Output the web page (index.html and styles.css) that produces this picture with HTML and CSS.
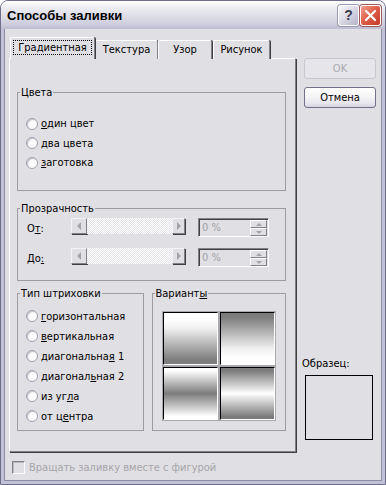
FILE: index.html
```html
<!DOCTYPE html>
<html lang="ru">
<head>
<meta charset="utf-8">
<title>Способы заливки</title>
<link rel="stylesheet" href="styles.css">
</head>
<body>
<div class="window">
  <div class="titlebar">
    <span class="title">Способы заливки</span>
    <div class="caps">
      <div class="cap help">?</div>
      <div class="cap close">
        <svg width="13" height="13" viewBox="0 0 13 13"><path d="M2 2 L11 11 M11 2 L2 11" stroke="#fff" stroke-width="2.2" stroke-linecap="round"/></svg>
      </div>
    </div>
  </div>
  <div class="client">
    <div class="main">
      <div class="left">
        <div class="tabs">
          <div class="tab active"><span class="focus">Градиентная</span></div>
          <div class="tab t2">Текстура</div>
          <div class="tab t3">Узор</div>
          <div class="tab t4">Рисунок</div>
        </div>
        <div class="panel">
          <fieldset class="group colors">
            <legend>Цвета</legend>
            <div class="items">
              <div class="radio"><span class="rb"></span><span><u>о</u>дин цвет</span></div>
              <div class="radio"><span class="rb"></span><span><u>д</u>ва цвета</span></div>
              <div class="radio"><span class="rb"></span><span><u>з</u>аготовка</span></div>
            </div>
          </fieldset>
          <fieldset class="group transp">
            <legend>Прозрачность</legend>
            <div class="items">
              <div class="trow">
                <span class="tlabel">О<u>т</u>:</span>
                <div class="scroll">
                  <span class="sbtn"><span class="arr-l"></span></span>
                  <span class="track"></span>
                  <span class="sbtn r"><span class="arr-r"></span></span>
                </div>
                <div class="spin">
                  <span class="val">0 %</span>
                  <span class="spbtns"><span class="spb"><span class="arr-u"></span></span><span class="spb"><span class="arr-d"></span></span></span>
                </div>
              </div>
              <div class="trow">
                <span class="tlabel">До<u>:</u></span>
                <div class="scroll">
                  <span class="sbtn"><span class="arr-l"></span></span>
                  <span class="track"></span>
                  <span class="sbtn r"><span class="arr-r"></span></span>
                </div>
                <div class="spin">
                  <span class="val">0 %</span>
                  <span class="spbtns"><span class="spb"><span class="arr-u"></span></span><span class="spb"><span class="arr-d"></span></span></span>
                </div>
              </div>
            </div>
          </fieldset>
          <div class="bottom-groups">
            <fieldset class="group hatch">
              <legend>Тип штриховки</legend>
              <div class="items">
                <div class="radio"><span class="rb"></span><span><u>г</u>оризонтальная</span></div>
                <div class="radio"><span class="rb"></span><span><u>в</u>ертикальная</span></div>
                <div class="radio"><span class="rb"></span><span>диагональна<u>я</u> 1</span></div>
                <div class="radio"><span class="rb"></span><span>диагонал<u>ь</u>ная 2</span></div>
                <div class="radio"><span class="rb"></span><span>из уг<u>л</u>а</span></div>
                <div class="radio"><span class="rb"></span><span>от ц<u>е</u>нтра</span></div>
              </div>
            </fieldset>
            <fieldset class="group variants">
              <legend>Вариант<u>ы</u></legend>
              <div class="tiles">
                <div class="tile g1"></div>
                <div class="tile g2"></div>
                <div class="tile g3"></div>
                <div class="tile g4"></div>
              </div>
            </fieldset>
          </div>
        </div>
      </div>
      <div class="right">
        <div class="btn disabled">OK</div>
        <div class="btn">Отмена</div>
        <div class="sample-label">Образец:</div>
        <div class="sample"></div>
      </div>
    </div>
    <div class="check"><span class="cb"></span><span>Вращать заливку вместе с фигурой</span></div>
  </div>
</div>
</body>
</html>
```

FILE: styles.css
```css
* { box-sizing: border-box; }
body {
  margin: 0;
  font-family: "DejaVu Sans Condensed", "DejaVu Sans", "Liberation Sans", sans-serif;
  font-size: 11px;
  color: #000;
  background: #fff;
}
u { text-decoration: underline; text-underline-offset: 1px; }

.window {
  width: 386px;
  height: 485px;
  border: 1px solid #6e6d8c;
  border-radius: 8px 8px 0 0;
  display: flex;
  flex-direction: column;
  overflow: hidden;
  background: #e0dfe3;
}
.titlebar {
  height: 28px;
  flex: none;
  display: flex;
  align-items: center;
  justify-content: space-between;
  padding: 0 4px 0 6px;
  background: linear-gradient(to bottom, #fefefe 0%, #ececf2 25%, #dddce7 55%, #cdccdc 85%, #bebdd1 100%);
}
.title {
  font: bold 13px "Liberation Sans", "DejaVu Sans", sans-serif;
  color: #000;
  margin-top: 1px;
}
.caps { display: flex; gap: 1px; }
.cap {
  width: 21px;
  height: 21px;
  border: 1px solid #fff;
  border-radius: 3px;
  display: flex;
  align-items: center;
  justify-content: center;
}
.help {
  background: linear-gradient(135deg, #f6f6fa 0%, #dddce8 45%, #b3b2c8 100%);
  color: #3a3a4e;
  font: bold 14px "Liberation Sans", sans-serif;
  box-shadow: 0 0 0 1px #9a99b4;
}
.close {
  background: linear-gradient(135deg, #f0a090 0%, #e0604c 45%, #c13a26 100%);
  box-shadow: 0 0 0 1px #a05a5a;
}

.client {
  flex: 1;
  border: 3px solid #c2c1d6;
  border-top: 0;
  box-shadow: inset 1px 0 #8d8ca8, inset -1px -1px #8d8ca8;
  padding: 8px 0 0 5px;
}
.main { display: flex; gap: 8px; }
.left { width: 287px; }

.tabs {
  display: flex;
  align-items: flex-end;
  height: 22px;
  margin-bottom: -1px;
  padding-left: 1px;
}
.tab {
  height: 19px;
  border: 1px solid;
  border-color: #fff #808086 transparent #fff;
  border-bottom: 0;
  border-radius: 2px 2px 0 0;
  box-shadow: 1px 0 0 #404040;
  background: #e0dfe3;
  display: flex;
  align-items: center;
  justify-content: center;
  padding-bottom: 1px;
}
.tab.active {
  width: 85px;
  height: 22px;
  position: relative;
  z-index: 1;
  padding-bottom: 3px;
}
.t2 { width: 63px; }
.t3 { width: 54px; }
.t4 { width: 57px; margin-left: 1px; }
.focus {
  width: 79px;
  height: 15px;
  border: 1px dotted #000;
  display: flex;
  align-items: center;
  justify-content: center;
}

.panel {
  height: 394px;
  border: 1px solid;
  border-color: #fff #808086 #808086 #fff;
  box-shadow: 1px 1px 0 #404040;
  padding: 27px 9px 0 7px;
}
.group {
  margin: 0;
  padding: 0;
  border: 1px solid #9d9da1;
  min-width: 0;
}
.group legend {
  margin-left: 2px;
  padding: 0 1px;
  line-height: 13px;
}
.colors { height: 105px; }
.colors .items { padding: 15px 0 0 8px; }
.radio {
  display: flex;
  align-items: center;
  gap: 3px;
  height: 19.5px;
}
.rb {
  width: 12px;
  height: 12px;
  border-radius: 50%;
  border: 1px solid #a2a2ae;
  background: radial-gradient(circle at 62% 62%, #ffffff 0%, #fafafa 45%, #dcdce2 100%);
  box-shadow: inset 1px 1px 0 #c8c8d0;
  flex: none;
}

.transp { height: 79px; margin-top: 11px; }
.transp .items { padding: 3px 0 0 9px; }
.trow { display: flex; align-items: flex-start; height: 19px; }
.trow + .trow { margin-top: 11px; }
.tlabel { width: 44px; line-height: 19px; padding-top: 1px; }
.scroll {
  width: 114px;
  height: 16px;
  display: flex;
  margin-right: 13px;
}
.track {
  flex: 1;
  background: repeating-conic-gradient(#ffffff 0 25%, #e4e3e8 0 50%) 0 0 / 2px 2px;
}
.sbtn {
  width: 16px;
  height: 16px;
  border: 1px solid;
  border-color: #f4f4f6 #808086 #808086 #f4f4f6;
  box-shadow: 1px 1px 0 #404040;
  background: #e0dfe3;
  display: flex;
  align-items: center;
  justify-content: center;
}
.sbtn.r { width: 13px; }
.arr-l, .arr-r, .arr-u, .arr-d { width: 0; height: 0; border: solid transparent; }
.arr-l { border-width: 4px 4px 4px 0; border-right-color: #a3a3aa; }
.arr-r { border-width: 4px 0 4px 4px; border-left-color: #a3a3aa; }
.arr-u { border-width: 0 3px 3px 3px; border-bottom-color: #a3a3aa; }
.arr-d { border-width: 3px 3px 0 3px; border-top-color: #a3a3aa; }

.spin {
  width: 71px;
  height: 19px;
  border: 1px solid;
  border-color: #808086 #fff #fff #808086;
  box-shadow: inset 1px 1px 0 #404040;
  background: #e0dfe3;
  display: flex;
  align-items: stretch;
  padding: 1px 1px 0 2px;
}
.val { flex: 1; color: #a3a3aa; line-height: 16px; padding-left: 1px; }
.spbtns { width: 17px; display: flex; flex-direction: column; gap: 0; }
.spb {
  flex: 1;
  border: 1px solid;
  border-color: #fff #808086 #808086 #fff;
  background: #e0dfe3;
  display: flex;
  align-items: center;
  justify-content: center;
}

.bottom-groups { display: flex; gap: 8px; margin-top: 6px; height: 144px; }
.hatch { width: 127px; height: 144px; }
.hatch .items { padding: 6px 0 0 8px; }
.hatch .radio { height: 20px; }
.variants { width: 135px; height: 144px; }
.tiles {
  display: grid;
  grid-template-columns: 55px 55px;
  grid-auto-rows: 53px;
  gap: 2px;
  padding: 12px 0 0 10px;
}
.tile {
  border: 1px solid;
  border-color: #000 #fff #fff #000;
  box-shadow: 0 0 0 1px #a8a8ae;
}
.g1 { background: linear-gradient(to bottom, #ffffff 12%, #f0f0f0 30%, #7c7c7c 92%); }
.g2 { background: linear-gradient(to bottom, #7c7c7c 8%, #f0f0f0 70%, #ffffff 88%); }
.g3 { background: linear-gradient(to bottom, #ffffff 5%, #7c7c7c 50%, #ffffff 95%); }
.g4 { background: linear-gradient(to bottom, #7c7c7c 5%, #ffffff 50%, #7c7c7c 95%); }

.right { width: 72px; display: flex; flex-direction: column; padding-top: 21px; }
.btn {
  width: 72px;
  height: 21px;
  border: 1px solid #727189;
  border-radius: 3px;
  background: linear-gradient(to bottom, #ffffff 0%, #f3f3f6 50%, #e4e3ea 85%, #d3d2dc 100%);
  display: flex;
  align-items: center;
  justify-content: center;
}
.btn + .btn { margin-top: 8px; }
.btn.disabled {
  border-color: #c8c7cf;
  background: #e6e5ea;
  color: #a9a8ae;
}
.sample-label { margin-top: 249px; margin-left: -2px; line-height: 13px; }
.sample {
  margin: 5px 0 0 1px;
  width: 68px;
  height: 65px;
  border: 1px solid #000;
}

.check {
  display: flex;
  align-items: center;
  gap: 4px;
  margin: 9px 0 0 3px;
  height: 13px;
  color: #a6a5aa;
}
.cb {
  width: 13px;
  height: 13px;
  border: 1px solid;
  border-color: #808086 #fff #fff #808086;
  box-shadow: inset 1px 1px 0 #b8b8be;
  background: #e0dfe3;
  flex: none;
}
```
